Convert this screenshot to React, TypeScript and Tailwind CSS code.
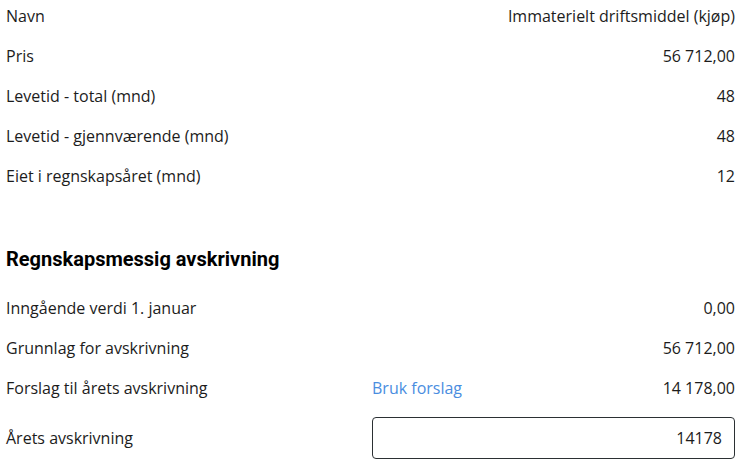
import React from 'react';

function Row({ label, children }: { label: string; children: React.ReactNode }) {
  return (
    <div className="grid grid-cols-[1fr_363px] items-center h-6">
      <div>{label}</div>
      <div className="flex items-center justify-between">{children}</div>
    </div>
  );
}

export default function App() {
  const top = [
    ['Navn', 'Immaterielt driftsmiddel (kjøp)'],
    ['Pris', '56 712,00'],
    ['Levetid - total (mnd)', '48'],
    ['Levetid - gjennværende (mnd)', '48'],
    ['Eiet i regnskapsåret (mnd)', '12'],
  ];

  return (
    <div
      className="w-[739px] h-[466px] bg-white text-[#1c1c1c] text-[16px] pl-[6px] pr-[4px] pt-1 overflow-hidden"
      style={{ fontFamily: '"Open Sans", "Noto Sans", sans-serif' }}
    >
      {/* asset info */}
      <div className="flex flex-col gap-4">
        {top.map(([l, v]) => (
          <Row key={l} label={l}>
            <span />
            <span>{v}</span>
          </Row>
        ))}
      </div>

      <h2
        className="mt-[57px] text-[20px] leading-7 font-bold text-black"
        style={{ fontFamily: 'Roboto, "Open Sans", sans-serif' }}
      >
        Regnskapsmessig avskrivning
      </h2>

      <div className="mt-[23px] flex flex-col gap-4">
        <Row label="Inngående verdi 1. januar">
          <span />
          <span>0,00</span>
        </Row>
        <Row label="Grunnlag for avskrivning">
          <span />
          <span>56 712,00</span>
        </Row>
        <Row label="Forslag til årets avskrivning">
          <button className="text-[#4a8ddf]">Bruk forslag</button>
          <span>14 178,00</span>
        </Row>
      </div>

      <div className="mt-[17px] grid grid-cols-[1fr_363px] items-center">
        <div>Årets avskrivning</div>
        <input
          className="h-[42px] w-full border border-[#2b3033] rounded-[4px] px-3 text-right outline-none"
          defaultValue="14178"
        />
      </div>
    </div>
  );
}
